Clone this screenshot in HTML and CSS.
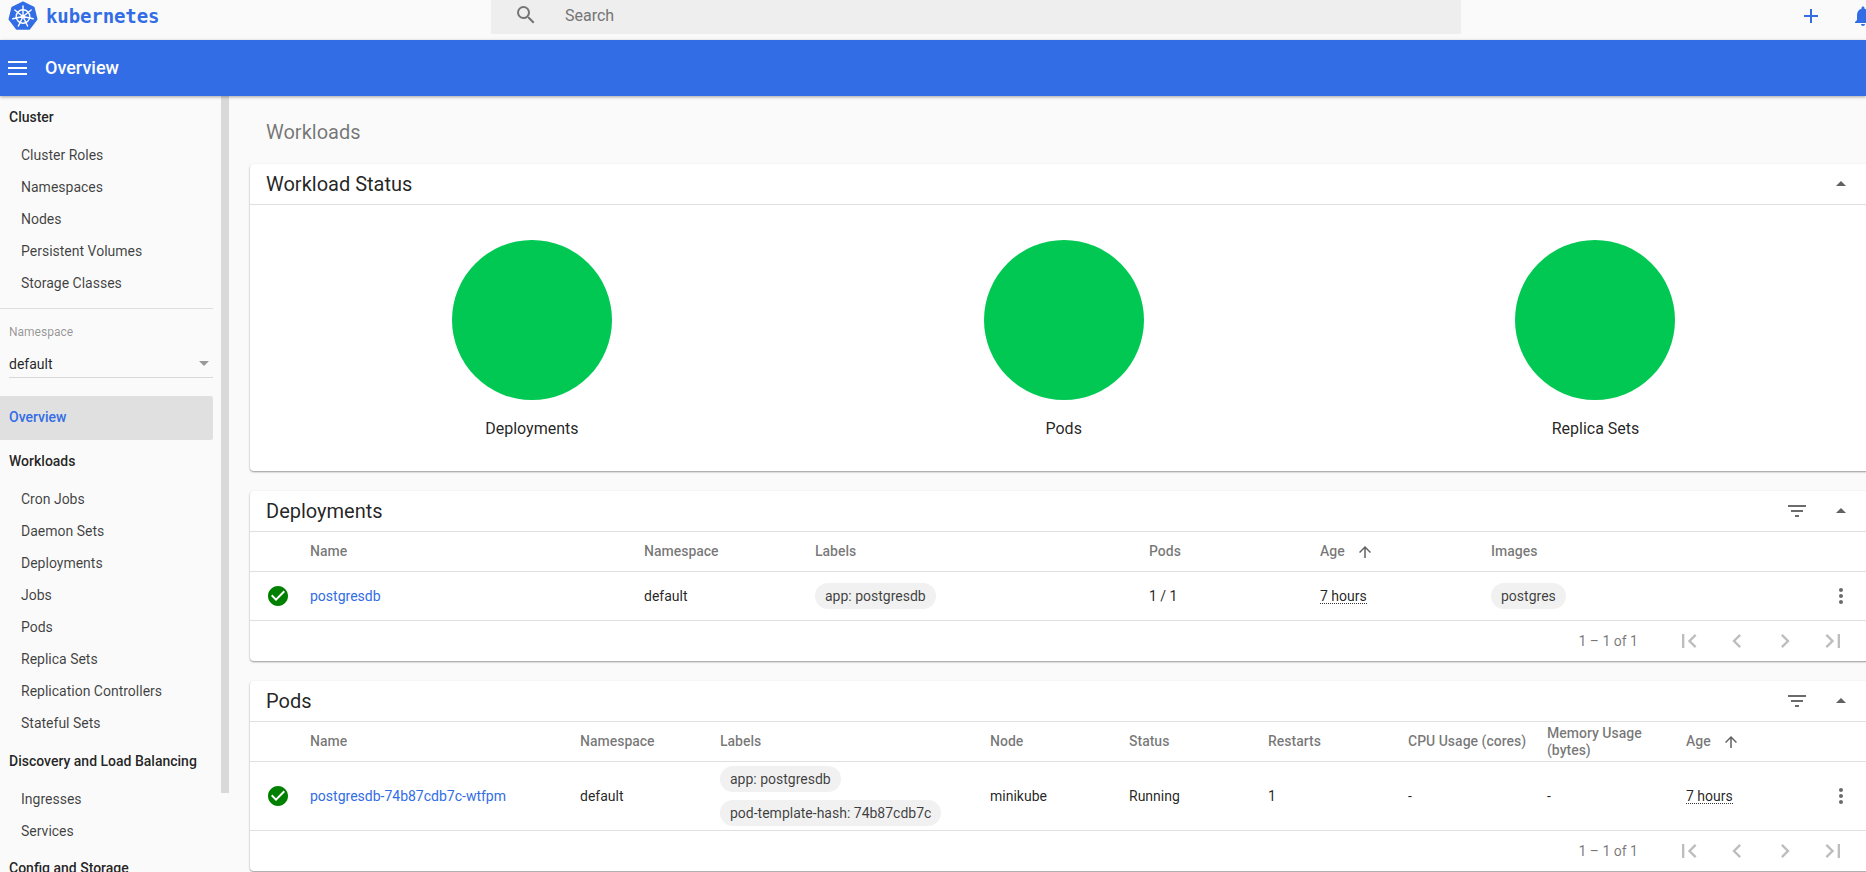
FILE: index.html
```html
<!DOCTYPE html>
<html lang="en">
<head>
<meta charset="utf-8">
<title>Overview - Kubernetes Dashboard</title>
<link rel="stylesheet" href="styles.css">
</head>
<body>
<svg class="defs" width="0" height="0" aria-hidden="true">
  <symbol id="i-check" viewBox="0 0 24 24"><path d="M12 2C6.48 2 2 6.48 2 12s4.48 10 10 10 10-4.48 10-10S17.52 2 12 2zm-2 15-5-5 1.41-1.41L10 14.17l7.59-7.59L19 8l-9 9z"/></symbol>
  <symbol id="i-filter" viewBox="0 0 24 24"><path d="M10 18h4v-2h-4v2zM3 6v2h18V6H3zm3 7h12v-2H6v2z"/></symbol>
  <symbol id="i-up" viewBox="0 0 24 24"><path d="M7 14l5-5 5 5z"/></symbol>
  <symbol id="i-more" viewBox="0 0 24 24"><path d="M12 8c1.1 0 2-.9 2-2s-.9-2-2-2-2 .9-2 2 .9 2 2 2zm0 2c-1.1 0-2 .9-2 2s.9 2 2 2 2-.9 2-2-.9-2-2-2zm0 6c-1.1 0-2 .9-2 2s.9 2 2 2 2-.9 2-2-.9-2-2-2z"/></symbol>
  <symbol id="i-arrow" viewBox="0 0 24 24"><path d="M4 12l1.41 1.41L11 7.83V20h2V7.83l5.58 5.59L20 12l-8-8-8 8z"/></symbol>
  <symbol id="i-first" viewBox="0 0 24 24"><path d="M18.41 16.59 13.82 12l4.59-4.59L17 6l-6 6 6 6zM6 6h2v12H6z"/></symbol>
  <symbol id="i-prev" viewBox="0 0 24 24"><path d="M15.41 7.41 14 6l-6 6 6 6 1.41-1.41L10.83 12z"/></symbol>
  <symbol id="i-next" viewBox="0 0 24 24"><path d="M10 6 8.59 7.41 13.17 12l-4.58 4.59L10 18l6-6z"/></symbol>
  <symbol id="i-last" viewBox="0 0 24 24"><path d="M5.59 7.41 10.18 12l-4.59 4.59L7 18l6-6-6-6zM16 6h2v12h-2z"/></symbol>
</svg>

<header class="topbar">
  <div class="brand">
    <svg class="logo" viewBox="0 0 30 30" aria-hidden="true">
      <path class="logo-hex" d="M15 1.5 25.6 6.6l2.9 11.6-7.4 9.6H8.9l-7.4-9.6L4.4 6.6z"/>
      <g class="logo-wheel">
        <circle cx="15" cy="15.5" r="6.8"/>
        <path d="M15 15.5V5M15 15.5 23.2 9M15 15.5 25.2 17.8M15 15.5 19.6 25M15 15.5 10.4 25M15 15.5 4.8 17.8M15 15.5 6.8 9"/>
      </g>
      <circle class="logo-hub" cx="15" cy="15.5" r="1.8"/>
    </svg>
    <span class="wordmark">kubernetes</span>
  </div>
  <div class="search">
    <svg class="search-icon" viewBox="0 0 24 24" aria-hidden="true"><path d="M15.5 14h-.79l-.28-.27A6.47 6.47 0 0 0 16 9.5 6.5 6.5 0 1 0 9.5 16c1.61 0 3.09-.59 4.23-1.57l.27.28v.79l5 4.99L20.49 19l-4.99-5zm-6 0C7.01 14 5 11.99 5 9.5S7.01 5 9.5 5 14 7.01 14 9.5 11.99 14 9.5 14z"/></svg>
    <span class="search-text">Search</span>
  </div>
  <div class="top-actions">
    <svg class="top-icon" viewBox="0 0 24 24" aria-hidden="true"><path d="M19 13h-6v6h-2v-6H5v-2h6V5h2v6h6v2z"/></svg>
    <svg class="top-icon" viewBox="0 0 24 24" aria-hidden="true"><path d="M12 22c1.1 0 2-.9 2-2h-4c0 1.1.9 2 2 2zm6-6v-5c0-3.07-1.63-5.64-4.5-6.32V4c0-.83-.67-1.5-1.5-1.5s-1.5.67-1.5 1.5v.68C7.64 5.36 6 7.92 6 11v5l-2 2v1h16v-1l-2-2z"/></svg>
  </div>
</header>

<div class="bluebar">
  <div class="burger"><span></span><span></span><span></span></div>
  <span class="bluebar-title">Overview</span>
</div>

<div class="shell">
  <aside class="sidebar">
    <nav class="nav">
      <div class="nav-title">Cluster</div>
      <a class="nav-item">Cluster Roles</a>
      <a class="nav-item">Namespaces</a>
      <a class="nav-item">Nodes</a>
      <a class="nav-item">Persistent Volumes</a>
      <a class="nav-item">Storage Classes</a>
      <hr class="nav-divider">
      <div class="ns">
        <div class="ns-label">Namespace</div>
        <div class="ns-select"><span>default</span><i class="ns-caret"></i></div>
      </div>
      <div class="nav-active">Overview</div>
      <div class="nav-title">Workloads</div>
      <a class="nav-item">Cron Jobs</a>
      <a class="nav-item">Daemon Sets</a>
      <a class="nav-item">Deployments</a>
      <a class="nav-item">Jobs</a>
      <a class="nav-item">Pods</a>
      <a class="nav-item">Replica Sets</a>
      <a class="nav-item">Replication Controllers</a>
      <a class="nav-item">Stateful Sets</a>
      <div class="nav-title nav-title-tall">Discovery and Load Balancing</div>
      <a class="nav-item">Ingresses</a>
      <a class="nav-item">Services</a>
      <div class="nav-title">Config and Storage</div>
    </nav>
    <div class="scroll-thumb"></div>
  </aside>

  <main class="main">
    <h1 class="page-title">Workloads</h1>

    <section class="card">
      <div class="card-head"><h2>Workload Status</h2>
        <svg class="ic ic-dark" aria-hidden="true"><use href="#i-up"/></svg></div>
      <div class="status-grid">
        <div class="status"><div class="ring"></div><div class="status-label">Deployments</div></div>
        <div class="status"><div class="ring"></div><div class="status-label">Pods</div></div>
        <div class="status"><div class="ring"></div><div class="status-label">Replica Sets</div></div>
      </div>
    </section>

    <section class="card">
      <div class="card-head"><h2>Deployments</h2>
        <svg class="ic ic-grey" aria-hidden="true"><use href="#i-filter"/></svg>
        <svg class="ic ic-dark" aria-hidden="true"><use href="#i-up"/></svg></div>
      <div class="row row-head cols-dep">
        <span></span><span>Name</span><span>Namespace</span><span>Labels</span><span>Pods</span>
        <span class="sort">Age<svg class="sort-ic" aria-hidden="true"><use href="#i-arrow"/></svg></span><span>Images</span><span></span>
      </div>
      <div class="row row-data cols-dep">
        <svg class="ok" aria-hidden="true"><use href="#i-check"/></svg>
        <a class="link">postgresdb</a><span>default</span>
        <span class="chips"><span class="chip">app: postgresdb</span></span>
        <span>1 / 1</span><span><span class="age">7 hours</span></span>
        <span class="chips"><span class="chip">postgres</span></span>
        <svg class="ic ic-grey ic-center" aria-hidden="true"><use href="#i-more"/></svg>
      </div>
      <div class="pager">
        <span class="range">1 – 1 of 1</span>
        <svg class="ic-page" aria-hidden="true"><use href="#i-first"/></svg>
        <svg class="ic-page" aria-hidden="true"><use href="#i-prev"/></svg>
        <svg class="ic-page" aria-hidden="true"><use href="#i-next"/></svg>
        <svg class="ic-page" aria-hidden="true"><use href="#i-last"/></svg>
      </div>
    </section>

    <section class="card">
      <div class="card-head"><h2>Pods</h2>
        <svg class="ic ic-grey" aria-hidden="true"><use href="#i-filter"/></svg>
        <svg class="ic ic-dark" aria-hidden="true"><use href="#i-up"/></svg></div>
      <div class="row row-head cols-pod">
        <span></span><span>Name</span><span>Namespace</span><span>Labels</span><span>Node</span><span>Status</span><span>Restarts</span><span>CPU Usage (cores)</span><span>Memory Usage (bytes)</span>
        <span class="sort">Age<svg class="sort-ic" aria-hidden="true"><use href="#i-arrow"/></svg></span><span></span>
      </div>
      <div class="row row-data row-tall cols-pod">
        <svg class="ok" aria-hidden="true"><use href="#i-check"/></svg>
        <a class="link">postgresdb-74b87cdb7c-wtfpm</a><span>default</span>
        <span class="chips"><span class="chip">app: postgresdb</span><span class="chip">pod-template-hash: 74b87cdb7c</span></span>
        <span>minikube</span><span>Running</span><span>1</span><span>-</span><span>-</span>
        <span><span class="age">7 hours</span></span>
        <svg class="ic ic-grey ic-center" aria-hidden="true"><use href="#i-more"/></svg>
      </div>
      <div class="pager">
        <span class="range">1 – 1 of 1</span>
        <svg class="ic-page" aria-hidden="true"><use href="#i-first"/></svg>
        <svg class="ic-page" aria-hidden="true"><use href="#i-prev"/></svg>
        <svg class="ic-page" aria-hidden="true"><use href="#i-next"/></svg>
        <svg class="ic-page" aria-hidden="true"><use href="#i-last"/></svg>
      </div>
    </section>
  </main>
</div>
</body>
</html>
```

FILE: styles.css
```css
* { box-sizing: border-box; }
html, body { margin: 0; height: 100%; }
body {
  width: 1866px;
  height: 872px;
  overflow: hidden;
  background: #fafafa;
  color: rgba(0,0,0,.87);
  font: 14px/20px Roboto, "Noto Sans", sans-serif;
  display: flex;
  flex-direction: column;
}
.defs { position: absolute; }

/* top bar */
.topbar { height: 40px; flex: none; display: flex; background: #fafafa; }
.brand { width: 491px; height: 32px; display: flex; align-items: center; padding-left: 8px; gap: 8px; }
.logo { width: 30px; height: 30px; }
.logo-hex { fill: #326de6; stroke: #326de6; stroke-width: 2; stroke-linejoin: round; }
.logo-wheel { fill: none; stroke: #fff; stroke-width: 1.4; stroke-linecap: round; }
.logo-hub { fill: #fff; }
.wordmark { font: 700 19px/32px "DejaVu Sans Mono", monospace; color: #326de6; letter-spacing: -.1px; }
.search { width: 970px; height: 34px; background: #eee; display: flex; align-items: center; padding-left: 23px; }
.search-icon { width: 24px; height: 24px; fill: #757575; margin-top: -4px; }
.search-text { margin-left: 27px; font-size: 16px; color: #757575; margin-top: -3px; }
.top-actions { margin-left: auto; margin-right: -9px; display: flex; gap: 28px; padding-top: 4px; }
.top-icon { width: 24px; height: 24px; fill: #326de6; }

/* blue bar */
.bluebar {
  height: 56px; flex: none; background: #326de6; color: #fff;
  display: flex; align-items: center; padding-left: 8px;
  box-shadow: 0 1px 3px rgba(0,0,0,.35); position: relative; z-index: 2;
}
.burger { width: 19px; display: flex; flex-direction: column; gap: 4px; }
.burger span { display: block; height: 2px; background: #fff; }
.bluebar-title { margin-left: 18px; font-size: 18px; font-weight: 500; }

/* shell */
.shell { flex: 1; min-height: 0; display: flex; }
.sidebar { width: 229px; flex: none; display: flex; overflow: hidden; align-items: flex-start; }
.nav { width: 221px; flex: none; }
.nav-title { height: 43px; padding: 0 8px 1px 9px; display: flex; align-items: center; font-weight: 500; color: rgba(0,0,0,.87); white-space: nowrap; }
.nav-title-tall { height: 44px; padding-top: 1px; }
.nav-item { display: flex; align-items: center; height: 32px; padding-left: 21px; color: rgba(0,0,0,.75); }
.nav-divider { border: 0; border-top: 1px solid #dedede; margin: 9px 8px 0 0; }
.ns { padding: 13px 8px 0 9px; height: 87px; }
.ns-label { font-size: 12px; line-height: 20px; color: rgba(0,0,0,.42); }
.ns-select { margin-top: 9px; height: 27px; padding-bottom: 1px; display: flex; align-items: center; justify-content: space-between; border-bottom: 1px solid #d9d9d9; color: rgba(0,0,0,.87); padding-right: 4px; }
.ns-caret { width: 0; height: 0; border: 5px solid transparent; border-top-color: #999; border-bottom: 0; }
.nav-active { height: 44px; width: 213px; padding: 0 0 2px 9px; display: flex; align-items: center; background: #e0e0e0; border-radius: 0 2px 2px 0; color: #326de6; font-weight: 500; }
.scroll-thumb { width: 8px; height: 697px; background: #d9d9d9; flex: none; }

/* main */
.main { flex: 1; min-width: 0; overflow: hidden; padding-left: 21px; }
.page-title { margin: 0; height: 68px; padding: 24px 0 0 16px; font-size: 20px; line-height: 24px; font-weight: 400; color: rgba(0,0,0,.54); }
.card { width: 1627px; background: #fff; border-radius: 4px 0 0 4px; margin-bottom: 20px; box-shadow: 0 1px 2px rgba(0,0,0,.4); }
.card-head { height: 41px; display: flex; align-items: center; padding: 0 24px 0 16px; gap: 20px; border-bottom: 1px solid #e0e0e0; }
.card-head h2 { margin: 0 auto 0 0; font-size: 20px; line-height: 24px; font-weight: 400; }

.ic { width: 24px; height: 24px; flex: none; }
.ic-dark { fill: #616161; }
.ic-grey { fill: #6b6b6b; }
.ic-center { justify-self: center; }
.ic-page { width: 28px; height: 28px; flex: none; fill: rgba(0,0,0,.26); }

.status-grid { display: grid; grid-template-columns: repeat(3, 531.8px); padding: 35px 16px 0; height: 266px; }
.status { display: flex; flex-direction: column; align-items: center; }
.ring { width: 160px; height: 160px; border-radius: 50%; background: #00c853; }
.status-label { margin-top: 19px; font-size: 16px; line-height: 20px; }

/* tables */
.row { display: grid; align-items: center; border-bottom: 1px solid #e0e0e0; }
.cols-dep { grid-template-columns: 60px 334px 171px 334px 171px 171px 330px 40px; }
.cols-pod { grid-template-columns: 60px 270px 140px 270px 139px 139px 140px 139px 139px 135px 40px; }
.row-head { height: 40px; color: rgba(0,0,0,.54); font-weight: 500; line-height: 17px; }
.row-data { height: 49px; }
.row-tall { height: 69px; }
.row > span, .row > a { padding-right: 10px; }
.sort { display: flex; align-items: center; }
.sort-ic { width: 18px; height: 18px; margin-left: 11px; fill: #616161; }
.ok { width: 24px; height: 24px; fill: #008000; margin-left: 16px; }
.link { color: #326de6; }
.age { border-bottom: 1px dotted #333; line-height: 14px; display: inline-block; }
.chips { display: flex; flex-direction: column; gap: 8px; align-items: flex-start; }
.chip { height: 26px; line-height: 26px; padding: 0 10px; border-radius: 13px; background: #f1f1f1; white-space: nowrap; color: rgba(0,0,0,.75); }
.pager { height: 40px; display: flex; align-items: center; justify-content: flex-end; padding-right: 30px; gap: 20px; }
.range { color: rgba(0,0,0,.54); margin-right: 17px; }
```
